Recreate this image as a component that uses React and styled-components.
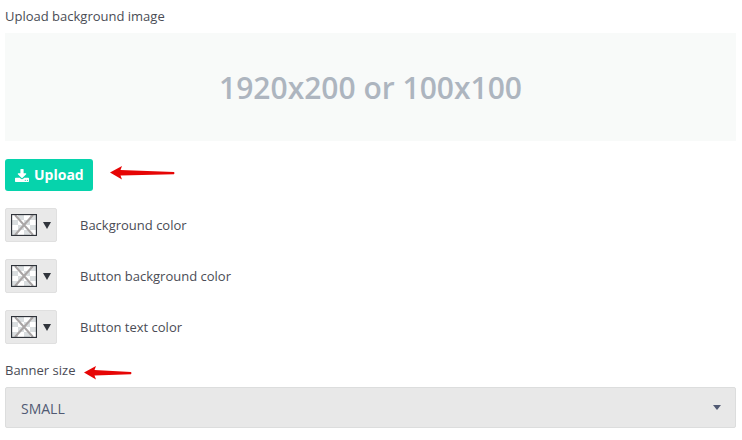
import React, { useState } from "react";
import styled, { createGlobalStyle } from "styled-components";

const GlobalStyle = createGlobalStyle`
  * {
    box-sizing: border-box;
  }
  body {
    margin: 0;
    background: #ffffff;
    color: #4a4c55;
    font-family: "Open Sans", "Noto Sans", sans-serif;
    font-size: 13px;
    line-height: 20px;
  }
`;

const Form = styled.form`
  display: flex;
  flex-direction: column;
  padding: 6px 6px 12px 5px;
`;

const FieldHead = styled.div`
  display: flex;
  align-items: flex-end;
  gap: 9px;
  margin-bottom: 7px;
`;

const Preview = styled.div`
  display: flex;
  align-items: center;
  justify-content: center;
  height: 108px;
  padding-top: 2px;
  background: #f8faf9;
  color: #adb5bf;
  font-size: 30px;
  font-weight: 600;
  line-height: 40px;
`;

const UploadRow = styled.div`
  display: flex;
  align-items: center;
  gap: 17px;
  margin: 18px 0 17px;
`;

const UploadButton = styled.button`
  display: flex;
  align-items: center;
  gap: 5px;
  height: 32px;
  padding: 0 9px 0 10px;
  border: none;
  border-radius: 3px;
  background: #06d3ac;
  color: #ffffff;
  font-family: inherit;
  font-size: 14px;
  font-weight: 700;
  line-height: 20px;
  cursor: pointer;
`;

const ColorList = styled.div`
  display: flex;
  flex-direction: column;
  gap: 17px;
  margin-bottom: 16px;
`;

const ColorRow = styled.div`
  display: flex;
  align-items: center;
  gap: 23px;
`;

const ColorButton = styled.button`
  display: flex;
  align-items: center;
  gap: 6px;
  width: 52px;
  height: 34px;
  padding: 0 5px;
  border: 1px solid #e0e0e0;
  border-radius: 2px;
  background: #e9e9e9;
  cursor: pointer;
`;

const SelectBox = styled.div`
  display: grid;
  align-items: center;

  > * {
    grid-area: 1 / 1;
  }
`;

const Select = styled.select`
  appearance: none;
  width: 100%;
  height: 41px;
  padding: 2px 32px 0 15px;
  border: 1px solid #dcdddd;
  border-radius: 2px;
  background: #e8e8e8;
  color: #515a73;
  font-family: inherit;
  font-size: 14px;
`;

const SelectCaret = styled.svg`
  justify-self: end;
  margin-right: 15px;
  pointer-events: none;
`;

function DownloadIcon() {
  return (
    <svg width="14" height="13" viewBox="0 0 1664 1536" aria-hidden="true">
      <path
        d="M1280 1344q0-26-19-45t-45-19-45 19-19 45 19 45 45 19 45-19 19-45zm256 0q0-26-19-45t-45-19-45 19-19 45 19 45 45 19 45-19 19-45zm128-224v320q0 40-28 68t-68 28h-1472q-40 0-68-28t-28-68v-320q0-40 28-68t68-28h465l135 136q58 56 136 56t136-56l136-136h464q40 0 68 28t28 68zm-325-569q17 41-14 70l-448 448q-18 19-45 19t-45-19l-448-448q-31-29-14-70 17-39 59-39h256v-448q0-26 19-45t45-19h256q26 0 45 19t19 45v448h256q42 0 59 39z"
        fill="currentColor"
      />
    </svg>
  );
}

function Swatch() {
  return (
    <svg width="26" height="22" viewBox="0 0 26 22" aria-hidden="true">
      <rect width="26" height="22" fill="#ffffff" />
      <path
        d="M7 1h6v5H7zM19 1h6v5h-6zM1 6h6v5H1zM13 6h6v5h-6zM7 11h6v5H7zM19 11h6v5h-6zM1 16h6v5H1zM13 16h6v5h-6z"
        fill="#dadee0"
      />
      <path d="M4 1l18 20M22 1L4 21" stroke="#a9a5a5" strokeWidth="2" />
      <rect
        x="0.5"
        y="0.5"
        width="25"
        height="21"
        fill="none"
        stroke="#30343b"
        strokeWidth="1.3"
      />
    </svg>
  );
}

// tip at the left, tail thins out to the right
function Arrow({ length, height }) {
  return (
    <svg width={length} height={height} aria-hidden="true">
      <path
        d={`M0 6.5L12 0L10.5 4L${length - 1} 6Q${length} 7 ${length - 1} 8.2L10.5 9.5L12 13.5Z`}
        fill="#e60505"
      />
    </svg>
  );
}

const colors = [
  { id: "background", label: "Background color" },
  { id: "button-background", label: "Button background color" },
  { id: "button-text", label: "Button text color" }
];

export default function App() {
  const [size, setSize] = useState("small");

  return (
    <>
      <GlobalStyle />
      <Form>
        <FieldHead>
          <label htmlFor="upload">Upload background image</label>
        </FieldHead>
        <Preview>1920x200 or 100x100</Preview>
        <UploadRow>
          <UploadButton type="button" id="upload">
            <DownloadIcon />
            Upload
          </UploadButton>
          <Arrow length={65} height={18} />
        </UploadRow>

        <ColorList>
          {colors.map(color => (
            <ColorRow key={color.id}>
              <ColorButton type="button" id={color.id}>
                <Swatch />
                <svg width="8" height="7" aria-hidden="true">
                  <path d="M0 0h8L4 7z" fill="#30343b" />
                </svg>
              </ColorButton>
              <label htmlFor={color.id}>{color.label}</label>
            </ColorRow>
          ))}
        </ColorList>

        <FieldHead>
          <label htmlFor="size">Banner size</label>
          <Arrow length={48} height={14} />
        </FieldHead>
        <SelectBox>
          <Select
            id="size"
            value={size}
            onChange={e => setSize(e.target.value)}
          >
            <option value="small">SMALL</option>
            <option value="medium">MEDIUM</option>
            <option value="large">LARGE</option>
          </Select>
          <SelectCaret width="8" height="5" aria-hidden="true">
            <path d="M0 0h8L4 5z" fill="#515a73" />
          </SelectCaret>
        </SelectBox>
      </Form>
    </>
  );
}
